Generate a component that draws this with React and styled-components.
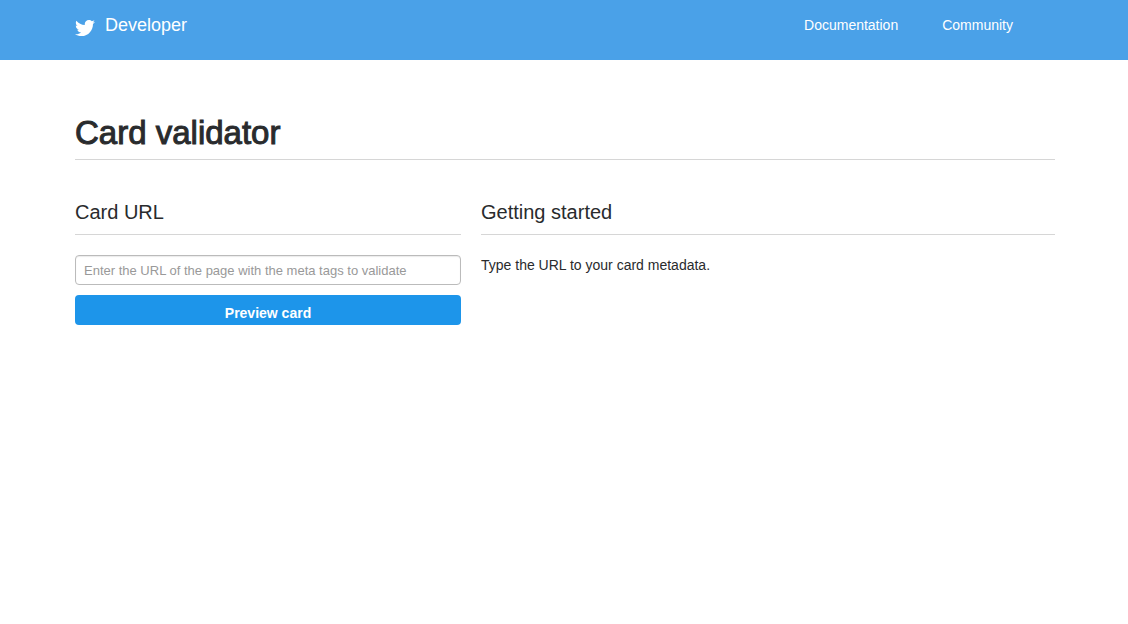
import React from "react";
import styled, { createGlobalStyle } from "styled-components";
import { FaTwitter } from "react-icons/fa";

const GlobalStyle = createGlobalStyle`
  *, *::before, *::after { box-sizing: border-box; }
  body {
    margin: 0;
    background: #fff;
    color: #292b2d;
    font: 14px/20px "Liberation Sans", Arial, sans-serif;
  }
`;

const Header = styled.header`
  height: 60px;
  background: #4aa1e8;
`;

const Container = styled.div`
  max-width: 982px;
  width: calc(100% - 40px);
  margin: 0 auto;
  padding-left: 2px;
`;

const Bar = styled(Container)`
  display: flex;
  justify-content: space-between;
  align-items: flex-start;
  padding-top: 15px;
`;

const Brand = styled.a`
  display: flex;
  gap: 10px;
  color: #fff;
  font-size: 18px;
  text-decoration: none;
`;

const Bird = styled(FaTwitter)`
  width: 20px;
  height: 20px;
  margin-top: 3px;
`;

const Nav = styled.nav`
  display: flex;
  gap: 44px;
  padding-right: 42px;
`;

const NavLink = styled.a`
  color: #fff;
  text-decoration: none;
`;

/* The outline thickens the regular face to a medium weight. */
const Title = styled.h1`
  margin: 50px 0 40px;
  padding: 3px 0 6px;
  border-bottom: 1px solid #d6d6d6;
  font-size: 33px;
  line-height: 40px;
  font-weight: 400;
  -webkit-text-stroke: 1px currentColor;
`;

const Columns = styled.div`
  display: grid;
  grid-template-columns: 386fr 574fr;
  gap: 20px;
`;

const SectionTitle = styled.h2`
  margin: 0 0 20px;
  padding-bottom: 10px;
  border-bottom: 1px solid #d6d6d6;
  font-size: 20px;
  line-height: 24px;
  font-weight: 400;
`;

const Form = styled.form`
  display: flex;
  flex-direction: column;
  gap: 10px;
`;

const UrlInput = styled.input`
  width: 100%;
  height: 30px;
  padding: 4px 8px;
  border: 1px solid #bbb;
  border-radius: 4px;
  box-shadow: inset 0 1px 1px rgba(0, 0, 0, 0.08);
  color: #292b2d;
  font: 13px/20px "Liberation Sans", Arial, sans-serif;
  &::placeholder { color: #999; opacity: 1; }
`;

const Button = styled.button`
  height: 30px;
  padding: 6px 12px 0;
  border: 0;
  border-radius: 4px;
  background: #1d95ea;
  color: #fff;
  font: bold 14px/20px "Liberation Sans", Arial, sans-serif;
`;

const Text = styled.p`
  margin: 0;
`;

export default function App() {
  return (
    <>
      <GlobalStyle />
      <Header>
        <Bar>
          <Brand href="#"><Bird aria-hidden="true" />Developer</Brand>
          <Nav>
            <NavLink href="#documentation">Documentation</NavLink>
            <NavLink href="#community">Community</NavLink>
          </Nav>
        </Bar>
      </Header>
      <Container as="main">
        <Title>Card validator</Title>
        <Columns>
          <section>
            <SectionTitle><label htmlFor="card-url">Card URL</label></SectionTitle>
            <Form onSubmit={(e) => e.preventDefault()}>
              <UrlInput
                id="card-url"
                type="text"
                placeholder="Enter the URL of the page with the meta tags to validate"
              />
              <Button type="submit">Preview card</Button>
            </Form>
          </section>
          <section>
            <SectionTitle>Getting started</SectionTitle>
            <Text>Type the URL to your card metadata.</Text>
          </section>
        </Columns>
      </Container>
    </>
  );
}
